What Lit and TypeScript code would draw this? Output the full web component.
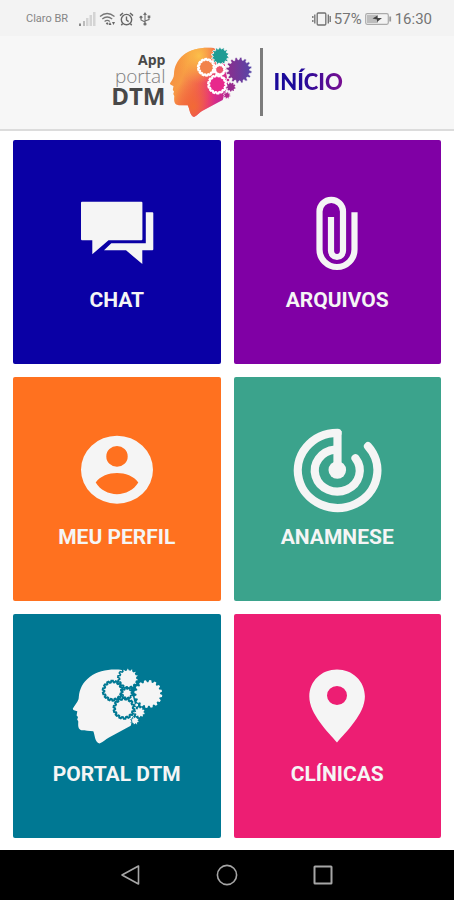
import { LitElement, html, svg, css } from "lit";
import { customElement } from "lit/decorators.js";

/** Outline of a cog: alternating outer and inner corners round a centre. */
function gear(cx: number, cy: number, r: number, teeth: number, depth: number): string {
  const points: string[] = [];
  const step = (Math.PI * 2) / teeth;
  for (let i = 0; i < teeth; i++) {
    const a = i * step;
    for (const [k, rad] of [[0, r - depth], [0.2, r], [0.55, r], [0.75, r - depth]]) {
      points.push(`${(cx + Math.cos(a + k * step) * rad).toFixed(2)} ${(cy + Math.sin(a + k * step) * rad).toFixed(2)}`);
    }
  }
  return `M${points.join("L")}Z`;
}

const chatIcon = svg`
  <path d="M13 17.7H72.4Q73.4 17.7 73.4 18.7V55Q73.4 56.3 72.4 56.3H39.5L23.3 70.3V56.3H13Q12 56.3 12 55V18.7Q12 17.7 13 17.7Z"/>
  <path d="M76.8 28.2H83.3Q84.3 28.2 84.3 29.2V65.3Q84.3 66.3 83.3 66.3H73.3V80L57 66.3H35L42.3 59.3H76.8Z"/>`;

const clipIcon = svg`
  <path fill="none" stroke="currentColor" stroke-width="6.2"
    d="M65.500 28.3V65.5A17.5 17.5 0 0 1 30.500 65.5V27.6A11.75 11.75 0 0 1 54 27.6V66.5A6 6.5 0 0 1 42 66.5V33"/>`;

const profileIcon = svg`
  <path fill-rule="evenodd" d="M12 48.7A36 34 0 1 1 84 48.7A36 34 0 1 1 12 48.7ZM37.3 35.4A10.7 10.3 0 1 0 58.7 35.4A10.7 10.3 0 1 0 37.3 35.4ZM26.7 61.6C31 55 40 52 48 52S65 55 69.3 61.6C65 69 56.5 73.2 48 73.2S31 69 26.7 61.6Z"/>`;

const radarIcon = svg`
  <g fill="none" stroke="currentColor" stroke-width="8.2" stroke-linecap="round">
    <path stroke-linecap="butt" d="M48.5 48.5V10"/>
    <path d="M48.5 11.9A39.8 37.5 0 1 0 79 25.2"/>
    <path d="M46 28.7A22.5 21 0 1 0 66.5 37.3"/>
  </g>
  <circle cx="48.3" cy="49" r="8.8"/>`;

const pinIcon = svg`
  <path fill-rule="evenodd" d="M48 11.4C63.3 11.4 75.9 22.8 75.9 38.5C75.9 56 56.5 74.5 48 84.5C39.5 74.5 20.3 56 20.3 38.5C20.3 22.8 32.7 11.4 48 11.4ZM48 28A10 9.5 0 1 0 48 47A10 9.5 0 1 0 48 28Z"/>`;

const mindIcon = svg`
  <path d="M53 12C42 10.5 29 12.5 21 18.7C13.5 24.5 10.5 31 9.8 39C9.7 42.5 8 44.5 3.9 50.4C3.5 52 6 52.5 8.3 53.2L7.6 57.5L9 59L8.2 61.5L9.3 63.5C9 68 9 71 12.5 72.3C16 73.4 20 72.5 24.3 73.3C26 77 25.5 84 30.5 85.6C34 84 36.5 81.6 40 79.5L61.7 67.7L67 50L60 24Z"/>
  <g fill="#f5f5f5" stroke="#007893" stroke-width="1.6">
    <path d="${gear(59.3, 20.3, 10.5, 14, 1.8)}"/>
    <path d="${gear(43.7, 32.7, 10, 14, 1.6)}" stroke-width="2"/>
    <path d="${gear(55, 50.3, 10.5, 14, 1.6)}" stroke-width="2"/>
    <path d="${gear(58, 35.3, 5.6, 9, 1.2)}"/>
    <path d="${gear(79.3, 36, 14, 16, 2.2)}" stroke="none"/>
    <path d="${gear(70.7, 54.3, 5, 9, 1.2)}" stroke="none"/>
    <path d="${gear(66, 62.7, 4.2, 8, 1)}" stroke-width="1"/>
    <circle cx="67.7" cy="47" r="2" stroke-width="1"/>
  </g>`;

const tiles = [
  { label: "CHAT", tone: "blue", icon: chatIcon },
  { label: "ARQUIVOS", tone: "purple", icon: clipIcon },
  { label: "MEU PERFIL", tone: "orange", icon: profileIcon },
  { label: "ANAMNESE", tone: "green", icon: radarIcon },
  { label: "PORTAL DTM", tone: "teal", icon: mindIcon },
  { label: "CLÍNICAS", tone: "pink", icon: pinIcon },
];

@customElement("status-bar")
export class StatusBar extends LitElement {
  static styles = css`
    :host { display: flex; justify-content: space-between; align-items: center; height: 36px;
      padding: 2px 22px 0 26px; box-sizing: border-box; background: #f3f3f3; color: #757575;
      font-family: Roboto, "Liberation Sans", sans-serif; font-size: 15px; line-height: 16px; }
    .group { display: flex; align-items: center; gap: 3px; }
    .carrier { font-size: 11px; color: #858585; margin-right: 8px; }
    svg { display: block; }
  `;
  render() {
    return html`
      <div class="group">
        <span class="carrier">Claro BR</span>
        <svg width="17" height="14" viewBox="0 0 17 14" aria-hidden="true">
          <path fill="#888" d="M0 11.5h2V14H0z"/><path fill="#bbb" d="M4 9h2v5H4z"/>
          <path fill="#d4d4d4" d="M7 6h2.5v8H7zM10.5 3H13v11h-2.5zM14 0h2.5v14H14z"/>
        </svg>
        <svg width="17" height="14" viewBox="0 0 17 14" fill="none" stroke="#777" stroke-width="1.3" aria-hidden="true">
          <path d="M1 4.5Q8 -1.5 15.5 4.5M3.3 7Q8 3 13.2 7M5.6 9.5Q8.2 7.4 10.8 9.5"/>
          <path fill="#666" stroke="none" d="M6.8 11.2L8.2 10.2L9.6 11.2L8.2 13zM11 10l1.5 3h-3zM14.5 13l-1.5-3h3z"/>
        </svg>
        <svg width="15" height="14" viewBox="0 0 15 14" fill="none" stroke="#666" stroke-width="1.4" aria-hidden="true">
          <circle cx="7.5" cy="7.6" r="5.2"/><path d="M7.5 4.5V8L9.6 9.6M1 3.6L4 1M14 3.6L11 1M3.5 11.8L2.3 13.3M11.5 11.8L12.7 13.3"/>
        </svg>
        <svg width="16" height="14" viewBox="0 0 16 14" fill="none" stroke="#707070" stroke-width="1.1" aria-hidden="true">
          <path d="M8 2V12M8 10L4 8V5.5M8 9L12 7.5V5"/>
          <path fill="#707070" stroke="none" d="M8 0l1.9 3H6.1zM10.7 3.5h2.6v2.6h-2.6z"/><circle cx="4" cy="5.2" r="1.4" fill="#707070" stroke="none"/><circle cx="8" cy="12" r="1.6" fill="#707070" stroke="none"/>
        </svg>
      </div>
      <div class="group">
        <svg width="19" height="14" viewBox="0 0 19 14" fill="none" stroke="#707070" stroke-width="1.3" aria-hidden="true">
          <rect x="5.2" y="1" width="8.6" height="12" rx="1"/><path d="M2.8 2.5V11.5M16.3 2.5V11.5M.8 4v2M.8 8v2M18.2 4v6"/>
        </svg>
        <span>57%</span>
        <svg width="27" height="12" viewBox="0 0 27 12" aria-hidden="true">
          <rect x=".7" y=".7" width="22.6" height="10.6" rx="1.5" fill="#f3f3f3" stroke="#aaa" stroke-width="1.2"/>
          <path fill="#bdbdbd" d="M2 2h11v8H2z"/><path fill="#444" d="M7.5 5.5L12.5 2.5V5H17L12 9V6.5z"/><path fill="#999" d="M24.3 3.5h1.8v5h-1.8z"/>
        </svg>
        <span>16:30</span>
      </div>`;
  }
}

@customElement("brand-header")
export class BrandHeader extends LitElement {
  static styles = css`
    :host { display: flex; justify-content: center; align-items: center; height: 95px; box-sizing: border-box;
      padding-bottom: 2px; background: #f7f7f7; border-bottom: 2px solid #dcdcdc; }
    .name { display: flex; flex-direction: column; align-items: flex-end; padding-bottom: 6px; color: #484848;
      font-family: "Open Sans", "Noto Sans", sans-serif; }
    .app { font-size: 14px; font-weight: 700; line-height: 16px; }
    .portal { font-size: 19px; font-weight: 300; line-height: 17px; color: #808080; }
    .dtm { font-size: 24px; font-weight: 700; line-height: 21px; }
    .head { display: block; margin-left: 4px; }
    .rule { width: 3px; height: 68px; margin: 0 10px 0 7px; background: #7c7c7c; }
    h1 { margin: 0; font-family: Lato, "Open Sans", sans-serif; font-size: 22px; font-weight: 900; line-height: 28px;
      color: transparent; background: linear-gradient(90deg, #1b0a9a 35%, #7a0f92); background-clip: text; -webkit-background-clip: text; }
  `;
  render() {
    return html`
      <div class="name"><span class="app">App</span><span class="portal">portal</span><span class="dtm">DTM</span></div>
      <svg class="head" width="84" height="72" viewBox="0 0 84 72" aria-hidden="true">
        <defs>
          <linearGradient id="skin" x1="0" y1=".1" x2="1" y2=".6">
            <stop offset="0" stop-color="#f58a3c"/><stop offset=".3" stop-color="#f79a45"/>
            <stop offset=".55" stop-color="#f2644f"/><stop offset=".8" stop-color="#e52b87"/><stop offset="1" stop-color="#c02a92"/>
          </linearGradient>
          <radialGradient id="sun" cx=".5" cy=".12" r=".4">
            <stop offset="0" stop-color="#fbc04a"/><stop offset="1" stop-color="#fbb040" stop-opacity="0"/>
          </radialGradient>
          <radialGradient id="ember" cx=".4" cy=".85" r=".4">
            <stop offset="0" stop-color="#f26a35"/><stop offset="1" stop-color="#f26a35" stop-opacity="0"/>
          </radialGradient>
          <linearGradient id="violet"><stop offset="0" stop-color="#8e2c8c"/><stop offset="1" stop-color="#5446a8"/></linearGradient>
        </defs>
        ${["skin", "sun", "ember"].map((id) => svg`<path fill="url(#${id})" d="M45 2C34 .8 22 2.8 14.5 9C8 14.5 5.2 21 5 28C4.8 31.5 3.5 33.5 1 37.3C.8 38.8 2.5 39.2 4.5 40L3.8 44L5 45.5L4.3 48L5.3 50C5 54 5 57.5 8 58.8C11.5 60 15 58.8 18.7 59.3C21 63 20.5 69.5 25 71C28 69.5 30 67 33 65L53.7 54L59 38L55 14Z"/>`)}
        <path fill="#1f9c94" stroke="#f7f7f7" stroke-width="1" d="${gear(51.3, 10, 8.8, 14, 1.6)}"/>
        <path fill="url(#violet)" stroke="#f7f7f7" stroke-width=".6" d="${gear(70, 24.3, 13, 16, 2.4)}"/>
        <g stroke="#fff" stroke-width="2">
          <path fill="#f2824a" d="${gear(37.3, 21.3, 8.4, 14, 1.2)}"/>
          <path fill="#ee5570" d="${gear(50.7, 23.7, 5.4, 10, 1)}"/>
          <path fill="#e8288c" d="${gear(48.3, 38.3, 9.2, 14, 1.2)}"/>
        </g>
        <path fill="#9a2c8e" d="${gear(62, 41, 4.6, 9, 1.1)}"/>
        <path fill="#b32a8d" stroke="#f7f7f7" stroke-width=".6" d="${gear(58, 49.3, 3.6, 8, 1)}"/>
        <circle cx="59" cy="34" r="1.8" fill="#c42a8d" stroke="#fff" stroke-width=".8"/>
      </svg>
      <div class="rule"></div>
      <h1>INÍCIO</h1>`;
  }
}

@customElement("nav-bar")
export class NavBar extends LitElement {
  static styles = css`
    :host { display: flex; justify-content: center; align-items: center; gap: 72px; height: 50px; background: #000; }
    button { display: grid; place-items: center; width: 24px; height: 24px; padding: 0; border: 0; background: none; color: #a6a6a6; }
    svg { display: block; fill: none; stroke: currentColor; stroke-width: 2; }
  `;
  render() {
    return html`
      <button aria-label="Voltar"><svg width="24" height="24" viewBox="0 0 24 24"><path stroke-width="1.6" stroke-linejoin="round" d="M19.5 3V21L3 12Z"/></svg></button>
      <button aria-label="Tela inicial"><svg width="24" height="24" viewBox="0 0 24 24"><circle cx="12" cy="12" r="9.6" stroke-width="1.6"/></svg></button>
      <button aria-label="Recentes"><svg width="24" height="24" viewBox="0 0 24 24"><rect x="3.5" y="3.5" width="17" height="17" rx=".5"/></svg></button>`;
  }
}

@customElement("app-root")
export class AppRoot extends LitElement {
  static styles = css`
    :host { display: flex; flex-direction: column; min-height: 100vh; background: #fff; }
    .grid { flex: 1; display: grid; grid-template-columns: 1fr 1fr; grid-auto-rows: minmax(224px, 1fr); gap: 13px; padding: 9px 13px 12px; }
    .tile { display: flex; flex-direction: column; align-items: center; justify-content: center; gap: 8px; padding: 0 0 8px;
      border: 0; border-radius: 2px; color: #f5f5f5; cursor: pointer;
      font-family: Roboto, "Liberation Sans", sans-serif; font-size: 21px; font-weight: 700; line-height: 24px; }
    .icon { display: block; width: 96px; height: 96px; fill: currentColor; }
    .blue { background: #0a00a5; }
    .purple { background: #8000a5; }
    .orange { background: #ff711f; }
    .green { background: #3ba38c; }
    .teal { background: #007893; }
    .pink { background: #ed1e73; }
  `;
  render() {
    return html`
      <status-bar></status-bar>
      <brand-header></brand-header>
      <main class="grid">
        ${tiles.map((t) => html`
          <button class="tile ${t.tone}">
            <svg class="icon" viewBox="0 0 96 96" aria-hidden="true">${t.icon}</svg>
            <span>${t.label}</span>
          </button>`)}
      </main>
      <nav-bar></nav-bar>`;
  }
}
